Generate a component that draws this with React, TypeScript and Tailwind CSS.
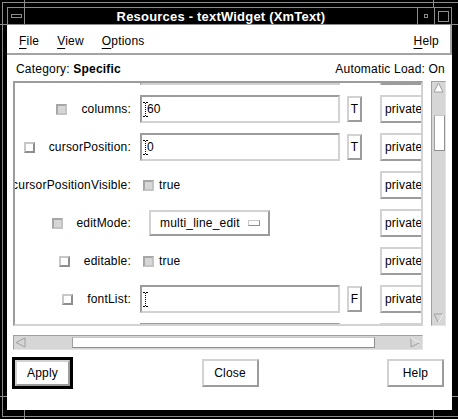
import React from 'react';

const outset =
  'border-2 border-t-[#d2d2d2] border-l-[#d2d2d2] border-r-[#9c9c9c] border-b-[#9c9c9c]';
const inset =
  'border-2 border-t-[#9c9c9c] border-l-[#9c9c9c] border-r-[#d2d2d2] border-b-[#d2d2d2]';

function IBeam() {
  return (
    <svg width="5" height="15" viewBox="0 0 5 15" className="shrink-0">
      <path d="M0 0.5h2M3 0.5h2M0 14.5h2M3 14.5h2" stroke="#000" strokeWidth="1" />
      <path d="M2.5 1v13" stroke="#000" strokeWidth="1" strokeDasharray="1 1" />
    </svg>
  );
}

function Check({ state }: { state: 'set' | 'unset' }) {
  return state === 'set' ? (
    <div className="w-[11px] h-[11px] shrink-0 border-2 border-t-[#a6a6a6] border-l-[#a6a6a6] border-r-[#c4c4c4] border-b-[#c4c4c4] bg-[#d6d6d6]" />
  ) : (
    <div className="w-[11px] h-[11px] shrink-0 border-2 border-t-[#c8c8c8] border-l-[#c8c8c8] border-r-[#8e8e8e] border-b-[#8e8e8e] bg-white" />
  );
}

type Row = {
  id: string;
  label: string;
  check: 'set' | 'unset';
  kind: 'field' | 'toggle' | 'option';
  value: string;
  type?: string;
  cursor?: boolean;
  access: string;
};

const rows: Row[] = [
  { id: 'prev', label: '', check: 'unset', kind: 'field', value: '', access: '' },
  { id: 'columns', label: 'columns:', check: 'set', kind: 'field', value: '60', type: 'T', cursor: true, access: 'private' },
  { id: 'cp', label: 'cursorPosition:', check: 'unset', kind: 'field', value: '0', type: 'T', cursor: true, access: 'private' },
  { id: 'cpv', label: 'cursorPositionVisible:', check: 'unset', kind: 'toggle', value: 'true', access: 'private' },
  { id: 'em', label: 'editMode:', check: 'set', kind: 'option', value: 'multi_line_edit', access: 'private' },
  { id: 'ed', label: 'editable:', check: 'unset', kind: 'toggle', value: 'true', access: 'private' },
  { id: 'fl', label: 'fontList:', check: 'unset', kind: 'field', value: '', type: 'F', cursor: true, access: 'private' },
  { id: 'next', label: '', check: 'unset', kind: 'field', value: '', access: '' },
];

function Value({ r }: { r: Row }) {
  if (r.kind === 'field') {
    return (
      <div className={`w-[200px] h-[28px] ${inset} bg-white flex items-center pl-[1px]`}>
        {r.cursor ? <IBeam /> : null}
        {r.value ? <span className="ml-[-1px] text-[12px] leading-none text-black">{r.value}</span> : null}
      </div>
    );
  }
  if (r.kind === 'toggle') {
    return (
      <div className="flex items-center ml-[3px] gap-[5px]">
        <div className="w-[11px] h-[11px] border-2 border-t-[#a6a6a6] border-l-[#a6a6a6] border-r-[#c4c4c4] border-b-[#c4c4c4] bg-[#d6d6d6]" />
        <span className="text-[12px] leading-none">{r.value}</span>
      </div>
    );
  }
  return (
    <div className={`ml-[9px] w-[121px] h-[26px] ${outset} bg-white flex items-center pl-[9px] pr-[8px] justify-between`}>
      <span className="text-[12px] leading-none">{r.value}</span>
      <div className="w-[12px] h-[6px] border border-t-[#c8c8c8] border-l-[#c8c8c8] border-r-[#8e8e8e] border-b-[#8e8e8e] bg-white" />
    </div>
  );
}

function ArrowUp() {
  return (
    <svg width="11" height="11" viewBox="0 0 11 11">
      <path d="M5.5 1L10 10H1Z" fill="#fff" stroke="#a0a0a0" strokeWidth="1" />
    </svg>
  );
}
function ArrowDown() {
  return (
    <svg width="11" height="11" viewBox="0 0 11 11">
      <path d="M5.5 10L10 1H1Z" fill="#d6d6d6" stroke="#a0a0a0" strokeWidth="1" />
      <path d="M5.5 10L10 1" stroke="#fff" strokeWidth="1" />
    </svg>
  );
}
function ArrowLeft() {
  return (
    <svg width="11" height="11" viewBox="0 0 11 11">
      <path d="M1 5.5L10 1V10Z" fill="#d6d6d6" stroke="#a0a0a0" strokeWidth="1" />
    </svg>
  );
}
function ArrowRight() {
  return (
    <svg width="11" height="11" viewBox="0 0 11 11">
      <path d="M10 5.5L1 1V10Z" fill="#d6d6d6" stroke="#a0a0a0" strokeWidth="1" />
      <path d="M1 1L10 5.5" stroke="#fff" strokeWidth="1" />
    </svg>
  );
}

export default function App() {
  return (
    <div className="relative w-[458px] h-[419px] bg-black overflow-hidden pt-[2px] pl-[2px] font-['Liberation_Sans',Arial,sans-serif] tracking-[0.2px] text-black">
      {/* window frame */}
      <div className="border-l border-t border-b border-[#8c8c8c] pl-[4px] pt-[4px] pb-[6px] pr-[6px] w-[456px]">
        {/* title bar */}
        <div className="flex h-[18px] border-t border-l border-b border-[#8c8c8c] bg-black">
          <div className="w-[17px] border-r border-[#8c8c8c] flex items-center justify-center">
            <div className="w-[11px] h-[4px] border border-[#8c8c8c]" />
          </div>
          <div className="flex-1 flex items-center justify-center text-white font-bold text-[13px] leading-none">
            Resources - textWidget (XmText)
          </div>
          <div className="w-[17px] border-l border-[#8c8c8c] flex items-center justify-center">
            <div className="w-[4px] h-[4px] border border-[#8c8c8c]" />
          </div>
          <div className="w-[18px] border-l border-r border-[#8c8c8c] flex items-center justify-center">
            <div className="w-[11px] h-[11px] border border-[#8c8c8c]" />
          </div>
        </div>

        {/* dialog content */}
        <div className="w-[445px] h-[385px] bg-white flex flex-col">
          {/* menu bar */}
          <div className="h-[30px] pt-[3px] border-r-2 border-b-2 border-[#a3a3a3] flex items-center pl-[12px] pr-[11px] gap-[18px] text-[12px]">
            <span><span className="underline underline-offset-[3px]">F</span>ile</span>
            <span><span className="underline underline-offset-[3px]">V</span>iew</span>
            <span><span className="underline underline-offset-[3px]">O</span>ptions</span>
            <span className="ml-auto"><span className="underline underline-offset-[3px]">H</span>elp</span>
          </div>

          {/* category row */}
          <div className="h-[26px] pt-[2px] pl-[9px] pr-[7px] flex items-center justify-between text-[12px] leading-none">
            <span>
              Category: <span className="font-bold">Specific</span>
            </span>
            <span>Automatic Load: On</span>
          </div>

          {/* scrolled area */}
          <div className="ml-[6px] flex gap-[8px] h-[245px]">
            <div className={`w-[410px] h-[245px] ${inset} bg-white overflow-hidden`}>
              <div className="flex flex-col mt-[-31px] text-[12px]">
                {rows.map((r) => (
                  <div key={r.id} className="flex items-center h-[38px] shrink-0">
                    <div className="w-[116px] shrink-0 flex justify-end items-center gap-[14px] whitespace-nowrap">
                      {r.label ? <Check state={r.check} /> : null}
                      {r.label ? <span className="leading-none">{r.label}</span> : null}
                    </div>
                    <div className="w-[200px] ml-[9px] shrink-0 flex items-center">
                      <Value r={r} />
                    </div>
                    <div className="w-[15px] ml-[7px] shrink-0">
                      {r.type ? (
                        <div className={`w-[15px] h-[26px] ${outset} bg-white flex items-center justify-center text-[12px] leading-none`}>
                          {r.type}
                        </div>
                      ) : null}
                    </div>
                    <div className="ml-[18px] shrink-0">
                      <div className={`w-[58px] h-[28px] ${outset} bg-white flex items-center pl-[3px] text-[12px] leading-none`}>
                        {r.access}
                      </div>
                    </div>
                  </div>
                ))}
              </div>
            </div>
            {/* vertical scrollbar */}
            <div className="w-[15px] h-[245px] bg-[#d6d6d6] border border-t-[#a0a0a0] border-l-[#a0a0a0] border-r-[#e4e4e4] border-b-[#e4e4e4] flex flex-col items-center">
              <ArrowUp />
              <div className="mt-[22px] self-end w-[11px] h-[36px] bg-white border border-t-[#c8c8c8] border-l-[#a0a0a0] border-r-[#8e8e8e] border-b-[#8e8e8e]" />
              <div className="flex-1" />
              <div className="mb-[1px]">
                <ArrowDown />
              </div>
            </div>
          </div>

          {/* horizontal scrollbar */}
          <div className="mt-[9px] ml-[6px] w-[410px] h-[15px] bg-[#d6d6d6] border border-t-[#a0a0a0] border-l-[#a0a0a0] border-r-[#e4e4e4] border-b-[#e4e4e4] flex items-center">
            <div className="ml-[1px]">
              <ArrowLeft />
            </div>
            <div className="ml-[46px] w-[303px] h-[11px] bg-white border border-t-[#c8c8c8] border-l-[#a0a0a0] border-r-[#8e8e8e] border-b-[#8e8e8e]" />
            <div className="flex-1" />
            <div className="mr-[1px]">
              <ArrowRight />
            </div>
          </div>

          {/* buttons */}
          <div className="mt-[7px] pl-[5px] pr-[8px] flex items-center justify-between text-[12px]">
            <div className="w-[61px] h-[32px] border-[3px] border-black">
              <div className={`w-full h-full ${outset} bg-white flex items-center justify-center leading-none`}>
                Apply
              </div>
            </div>
            <div className={`w-[57px] h-[28px] ${outset} bg-white flex items-center justify-center leading-none`}>
              Close
            </div>
            <div className={`w-[57px] h-[28px] ${outset} bg-white flex items-center justify-center leading-none`}>
              Help
            </div>
          </div>
        </div>
      </div>

      {/* resize handle ticks on the frame */}
      <div className="absolute left-[24px] top-0 w-px h-[7px] bg-[#8c8c8c]" />
      <div className="absolute left-[433px] top-0 w-px h-[7px] bg-[#8c8c8c]" />
      <div className="absolute left-[24px] top-[410px] w-px h-[9px] bg-[#8c8c8c]" />
      <div className="absolute left-[433px] top-[410px] w-px h-[9px] bg-[#8c8c8c]" />
      <div className="absolute left-0 top-[24px] w-[7px] h-px bg-[#8c8c8c]" />
      <div className="absolute left-0 top-[396px] w-[7px] h-px bg-[#8c8c8c]" />
      <div className="absolute left-[452px] top-[24px] w-[6px] h-px bg-[#8c8c8c]" />
      <div className="absolute left-[452px] top-[396px] w-[6px] h-px bg-[#8c8c8c]" />
    </div>
  );
}
